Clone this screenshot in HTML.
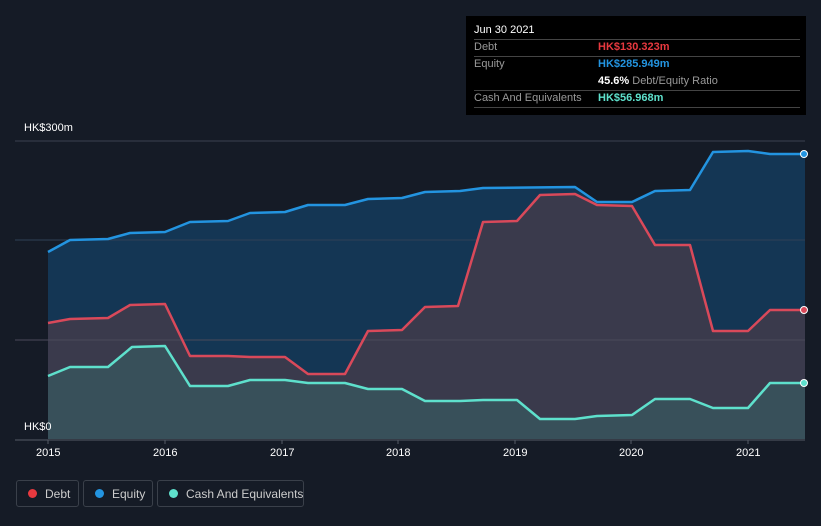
<!DOCTYPE html>
<html><head><style>
body{margin:0;background:#151b26;font-family:"Liberation Sans",sans-serif;}
.wrap{position:relative;width:821px;height:526px;overflow:hidden;background:#151b26;}
.tip{position:absolute;left:466px;top:16px;width:340px;height:99px;background:#000;font-size:11px;color:#999;}
.tip .r{position:absolute;left:8px;right:6px;border-bottom:1px solid #444;height:17px;line-height:17px;white-space:nowrap;}
.tip .v{position:absolute;left:124px;font-weight:bold;}
.leg{position:absolute;top:480px;height:27px;border:1px solid #3a404a;border-radius:3px;color:#ccc;font-size:12px;line-height:26px;box-sizing:border-box;white-space:nowrap;}
.leg i{position:absolute;left:11px;top:8px;width:9px;height:9px;border-radius:50%;}
.leg span{position:absolute;left:28px;}
.ax{position:absolute;color:#fff;font-size:11px;}
</style></head><body><div class="wrap">
<svg width="821" height="526" style="position:absolute;left:0;top:0">
<line x1="15" y1="141" x2="805" y2="141" stroke="#3a4150"/>
<polygon fill="#143654" points="48,252 70,240 108,239 130,233 165,232 190,222 228,221 250,213 285,212 308,205 345,205 368,199 402,198 425,192 460,191 483,188 575,187 597,202 632,202 655,191 690,190 713,152 748,151 770,154 805,154 805,439 48,439"/>
<line x1="15" y1="240" x2="805" y2="240" stroke="#2f4056"/>
<polygon fill="#3a3a4c" points="48,323 70,319 108,318 130,305 165,304 190,356 228,356 250,357 285,357 308,374 345,374 368,331 402,330 425,307 458,306 483,222 517,221 540,195 575,194 597,205 632,206 655,245 690,245 713,331 748,331 770,310 805,310 805,439 48,439"/>
<line x1="15" y1="340" x2="805" y2="340" stroke="#4a4a5a"/>
<polygon fill="#38505a" points="48,376 70,367 108,367 132,347 165,346 190,386 228,386 250,380 285,380 308,383 345,383 368,389 402,389 425,401 460,401 483,400 517,400 540,419 575,419 597,416 632,415 655,399 690,399 713,408 748,408 770,383 805,383 805,439 48,439"/>
<polyline fill="none" stroke="#2394e0" stroke-width="2.5" stroke-linejoin="round" points="48,252 70,240 108,239 130,233 165,232 190,222 228,221 250,213 285,212 308,205 345,205 368,199 402,198 425,192 460,191 483,188 575,187 597,202 632,202 655,191 690,190 713,152 748,151 770,154 805,154"/>
<polyline fill="none" stroke="#d9495a" stroke-width="2.5" stroke-linejoin="round" points="48,323 70,319 108,318 130,305 165,304 190,356 228,356 250,357 285,357 308,374 345,374 368,331 402,330 425,307 458,306 483,222 517,221 540,195 575,194 597,205 632,206 655,245 690,245 713,331 748,331 770,310 805,310"/>
<polyline fill="none" stroke="#5ee0cc" stroke-width="2.5" stroke-linejoin="round" points="48,376 70,367 108,367 132,347 165,346 190,386 228,386 250,380 285,380 308,383 345,383 368,389 402,389 425,401 460,401 483,400 517,400 540,419 575,419 597,416 632,415 655,399 690,399 713,408 748,408 770,383 805,383"/>
<line x1="15" y1="440" x2="805" y2="440" stroke="#555b66"/>
<g stroke="#555b66"><line x1="48" y1="440" x2="48" y2="444"/><line x1="165" y1="440" x2="165" y2="444"/><line x1="282" y1="440" x2="282" y2="444"/><line x1="398" y1="440" x2="398" y2="444"/><line x1="515" y1="440" x2="515" y2="444"/><line x1="631" y1="440" x2="631" y2="444"/><line x1="748" y1="440" x2="748" y2="444"/></g>
<circle cx="804" cy="154" r="3.5" fill="#2394e0" stroke="#fff" stroke-width="1"/>
<circle cx="804" cy="310" r="3.5" fill="#d9495a" stroke="#fff" stroke-width="1"/>
<circle cx="804" cy="383" r="3.5" fill="#5ee0cc" stroke="#fff" stroke-width="1"/>
</svg>
<div class="ax" style="left:24px;top:122px">HK$300m</div>
<div class="ax" style="left:24px;top:421px">HK$0</div>
<div class="ax" style="left:36px;top:447px">2015</div>
<div class="ax" style="left:153px;top:447px">2016</div>
<div class="ax" style="left:270px;top:447px">2017</div>
<div class="ax" style="left:386px;top:447px">2018</div>
<div class="ax" style="left:503px;top:447px">2019</div>
<div class="ax" style="left:619px;top:447px">2020</div>
<div class="ax" style="left:736px;top:447px">2021</div>
<div class="tip">
<div class="r" style="top:6px;color:#fff">Jun 30 2021</div>
<div class="r" style="top:23px">Debt<span class="v" style="color:#e8393f">HK$130.323m</span></div>
<div class="r" style="top:40px;border:none">Equity<span class="v" style="color:#2394e0">HK$285.949m</span></div>
<div class="r" style="top:57px"><span class="v" style="color:#fff">45.6% <span style="color:#999;font-weight:normal">Debt/Equity Ratio</span></span></div>
<div class="r" style="top:74px">Cash And Equivalents<span class="v" style="color:#5ee0cc">HK$56.968m</span></div>
</div>
<div class="leg" style="left:16px;width:63px"><i style="background:#e8393f"></i><span>Debt</span></div>
<div class="leg" style="left:83px;width:70px"><i style="background:#2394e0"></i><span>Equity</span></div>
<div class="leg" style="left:157px;width:147px"><i style="background:#5ee0cc"></i><span>Cash And Equivalents</span></div>
</div></body></html>
